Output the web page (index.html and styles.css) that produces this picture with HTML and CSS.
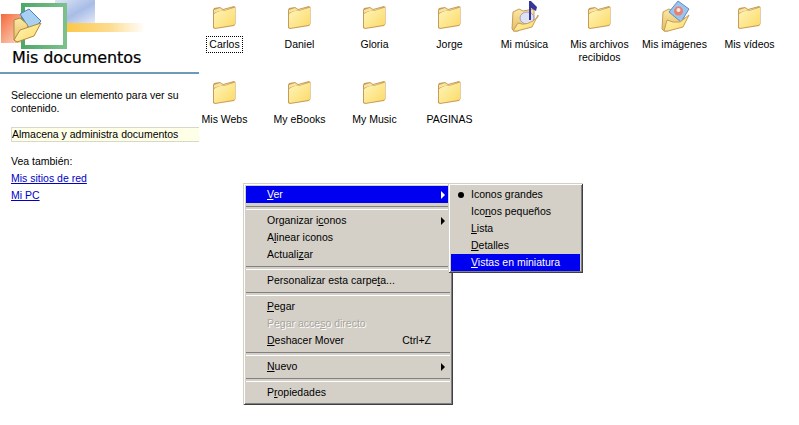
FILE: index.html
```html
<!DOCTYPE html>
<html lang="es">
<head>
<meta charset="utf-8">
<title>Mis documentos</title>
<link rel="stylesheet" href="styles.css">
</head>
<body>
<svg class="defs" width="0" height="0">
  <defs>
    <linearGradient id="fr" x1="0" y1="0" x2="1" y2="1"><stop offset="0" stop-color="#fff6bc"/><stop offset="1" stop-color="#fbd966"/></linearGradient>
    <linearGradient id="bk" x1="0" y1="0" x2="0" y2="1"><stop offset="0" stop-color="#fbe9a4"/><stop offset="1" stop-color="#e4bc62"/></linearGradient>
    <linearGradient id="gr" x1="0" y1="0" x2="1" y2="0"><stop offset="0" stop-color="#4fa868"/><stop offset="1" stop-color="#7cc08c"/></linearGradient>
    <linearGradient id="or" x1="0" y1="0" x2="1" y2="1"><stop offset="0" stop-color="#f4693a"/><stop offset="1" stop-color="#fde3d2"/></linearGradient>
    <linearGradient id="ye" x1="0" y1="0" x2="1" y2="0"><stop offset="0" stop-color="#fcc84a"/><stop offset=".55" stop-color="#fddc90"/><stop offset="1" stop-color="#fff"/></linearGradient>
    <linearGradient id="bl" x1="0" y1="0" x2="1" y2="1"><stop offset="0" stop-color="#dfe6f6"/><stop offset=".55" stop-color="#a8bce6"/><stop offset="1" stop-color="#e4eaf8"/></linearGradient>
    <symbol id="folder" viewBox="0 0 24 24">
      <path d="M1 5 L2 3 L8 2 L11 4 L22 1 L23.500 2 L23.500 19 L22 21 L3 24 L1 23 Z" fill="#c89c58"/>
      <path d="M2 9 Q8 5 12 6 L23 2.500 L23 19 L21.500 20 L3 23 L2 22 Z" fill="url(#fr)"/>
      <path d="M2 5 L8 3 L11 5 L22 2 L12 5.500 Q7 5 2 8 Z" fill="#f6e4a0"/>
    </symbol>
    <symbol id="open" viewBox="0 0 32 32">
      <path d="M4 12 L10 9 L14 11 L25 9 L25 19 L9 31 L5 31 L3 29 Z" fill="url(#bk)" stroke="#c89c58"/>
    </symbol>
  </defs>
</svg>

<div class="page">
  <aside class="side">
    <div class="banner">
      <svg class="art" width="150" height="50" viewBox="0 0 150 50">
        <rect x="55" y="0" width="40" height="23" fill="url(#bl)"/>
        <rect x="67" y="23" width="78" height="9" fill="url(#ye)"/>
        <rect x="1" y="14" width="24" height="29" fill="url(#or)"/>
        <rect x="23" y="5" width="42" height="42" fill="#fff" stroke="url(#gr)" stroke-width="4"/>
        <path d="M20 14 L29 9 L41 21 L31 31 Z" fill="#a8d0f0" stroke="#4a80c0"/>
        <path d="M14 20 L20 18 L27 24 L30 35 L17 42 L14 40 Z" fill="url(#bk)" stroke="#b08840"/>
        <path d="M20 30 L41 23 L34 36 L17 42 L14 40 Z" fill="url(#fr)" stroke="#b08840"/>
      </svg>
      <h1 class="title">Mis documentos</h1>
    </div>
    <div class="rule"></div>
    <p class="hint">Seleccione un elemento para ver su contenido.</p>
    <p class="infotip">Almacena y administra documentos</p>
    <p class="see">Vea también:</p>
    <a class="link" href="#">Mis sitios de red</a>
    <a class="link" href="#">Mi PC</a>
  </aside>

  <main class="icons">
    <div class="item"><svg class="ico"><use href="#folder"/></svg><span class="name focus">Carlos</span></div>
    <div class="item"><svg class="ico"><use href="#folder"/></svg><span class="name">Daniel</span></div>
    <div class="item"><svg class="ico"><use href="#folder"/></svg><span class="name">Gloria</span></div>
    <div class="item"><svg class="ico"><use href="#folder"/></svg><span class="name">Jorge</span></div>
    <div class="item">
      <svg class="ico wide" viewBox="0 0 32 32">
        <use href="#open" width="32" height="32"/>
        <ellipse cx="18" cy="18" rx="7" ry="6" fill="#dfe2f4" stroke="#a0a0cc"/>
        <path d="M20 20 L20 1 L22 1 L28 7 L27 11 L22 8 L22 20 Z" fill="#36369a"/>
        <path d="M9 23 Q18 27 29 17 L29 15 L23 27 L8 31 L4 31 Z" fill="url(#fr)" stroke="#c89c58"/>
      </svg>
      <span class="name">Mi música</span>
    </div>
    <div class="item"><svg class="ico"><use href="#folder"/></svg><span class="name">Mis archivos recibidos</span></div>
    <div class="item">
      <svg class="ico wide" viewBox="0 0 32 32">
        <use href="#open" width="32" height="32"/>
        <path d="M10 12 L19 1 L30 9 L22 22 Z" fill="#9cc4ec" stroke="#5a8cc8"/>
        <circle cx="19.500" cy="11" r="4.500" fill="#e88070"/>
        <circle cx="19.500" cy="10" r="2" fill="#f8e8e0"/>
        <path d="M8 20 L14 22 L21 22 L30 15 L24 27 L9 31 L5 31 Z" fill="url(#fr)" stroke="#c89c58"/>
      </svg>
      <span class="name">Mis imágenes</span>
    </div>
    <div class="item"><svg class="ico"><use href="#folder"/></svg><span class="name">Mis vídeos</span></div>
    <div class="item"><svg class="ico"><use href="#folder"/></svg><span class="name">Mis Webs</span></div>
    <div class="item"><svg class="ico"><use href="#folder"/></svg><span class="name">My eBooks</span></div>
    <div class="item"><svg class="ico"><use href="#folder"/></svg><span class="name">My Music</span></div>
    <div class="item"><svg class="ico"><use href="#folder"/></svg><span class="name">PAGINAS</span></div>
  </main>
</div>

<div class="menu main-menu">
  <div class="mi sel"><span class="lab"><u>V</u>er</span><i class="arrow"></i></div>
  <div class="sep"></div>
  <div class="mi"><span class="lab">Organizar i<u>c</u>onos</span><i class="arrow dark"></i></div>
  <div class="mi"><span class="lab">A<u>l</u>inear iconos</span></div>
  <div class="mi"><span class="lab">Actuali<u>z</u>ar</span></div>
  <div class="sep"></div>
  <div class="mi"><span class="lab">Personalizar esta carpe<u>t</u>a...</span></div>
  <div class="sep"></div>
  <div class="mi"><span class="lab"><u>P</u>egar</span></div>
  <div class="mi off"><span class="lab">Pegar acce<u>s</u>o directo</span></div>
  <div class="mi"><span class="lab"><u>D</u>eshacer Mover</span><span class="key">Ctrl+Z</span></div>
  <div class="sep"></div>
  <div class="mi"><span class="lab"><u>N</u>uevo</span><i class="arrow dark"></i></div>
  <div class="sep"></div>
  <div class="mi"><span class="lab">P<u>r</u>opiedades</span></div>
</div>

<div class="menu sub-menu">
  <div class="mi"><i class="dot"></i><span class="lab">Iconos <u>g</u>randes</span></div>
  <div class="mi"><span class="lab">Ico<u>n</u>os pequeños</span></div>
  <div class="mi"><span class="lab"><u>L</u>ista</span></div>
  <div class="mi"><span class="lab"><u>D</u>etalles</span></div>
  <div class="mi sel"><span class="lab"><u>V</u>istas en miniatura</span></div>
</div>
</body>
</html>
```

FILE: styles.css
```css
* { box-sizing: border-box; }
html, body { margin: 0; height: 100%; background: #fff; overflow: hidden; }
body { font: 10.500px/13px "Liberation Sans", Arial, sans-serif; color: #000; position: relative; }
.defs { position: absolute; }

.page { display: flex; align-items: flex-start; }

.side { width: 199px; flex: none; }
.banner { height: 72px; display: flex; flex-direction: column; }
.art { display: block; flex: none; }
.title { margin: -2px 0 0; padding: 0 0 0 12px; font: 400 16px/20px "DejaVu Sans", sans-serif; letter-spacing: -.1px; white-space: nowrap; -webkit-text-stroke: .2px #000; }
.rule { height: 2px; background: #6c9ab8; }
.hint { margin: 15px 0 0 11px; width: 185px; line-height: 13px; }
.infotip { margin: 12px 0 0 11px; padding: 0; height: 15px; line-height: 13px; background: #ffffe8; border: 1px solid #d8d8c8; border-right: 0; white-space: nowrap; }
.see { margin: 13px 0 0 11px; }
.link { display: block; margin: 4px 0 0 11px; color: #0000c8; }

.icons { flex: none; width: 600px; display: grid; grid-template-columns: repeat(8, 75px); grid-auto-rows: 75px; margin-left: -12px; }
.item { display: flex; flex-direction: column; align-items: center; padding-top: 5px; text-align: center; }
.ico { width: 24px; height: 24px; flex: none; overflow: visible; margin-left: -2px; }
.ico.wide { width: 32px; height: 32px; margin: -5px 0 -3px; }
.name { margin-top: 9px; padding: 0 1px; width: fit-content; max-width: 72px; line-height: 13px; }
.focus { outline: 1px dotted #000; outline-offset: 0; padding: 1px 2px; margin-top: 8px; }

.menu { position: absolute; background: #d4d0c8; box-shadow: inset 1px 1px 0 #d4d0c8, inset -1px -1px 0 #404040, inset 2px 2px 0 #fff, inset -2px -2px 0 #808080; }
.main-menu { left: 243px; top: 183px; width: 210px; padding: 3px; height: 222px; }
.sub-menu { left: 448px; top: 183px; width: 135px; height: 90px; padding: 3px; }
.mi { height: 17px; display: flex; align-items: center; position: relative; padding: 0 8px 0 21px; line-height: 13px; white-space: nowrap; }
.lab { flex: 1; }
.sub-menu .mi { padding-left: 20px; }
.sel { background: #0000f0; color: #fff; }
.off { color: #a8a49c; text-shadow: 1px 1px 0 #fff; }
.key { margin-right: 11px; }
.sep { height: 9px; display: flex; align-items: center; }
.sep::before { content: ""; flex: 1; height: 2px; border-top: 1px solid #808080; border-bottom: 1px solid #fff; }
.arrow { position: absolute; right: 5px; top: 5px; width: 0; height: 0; border-left: 4px solid #fff; border-top: 4px solid transparent; border-bottom: 4px solid transparent; }
.arrow.dark { border-left-color: #000; }
.dot { position: absolute; left: 7px; top: 6px; width: 6px; height: 6px; border-radius: 50%; background: #000; }
```
